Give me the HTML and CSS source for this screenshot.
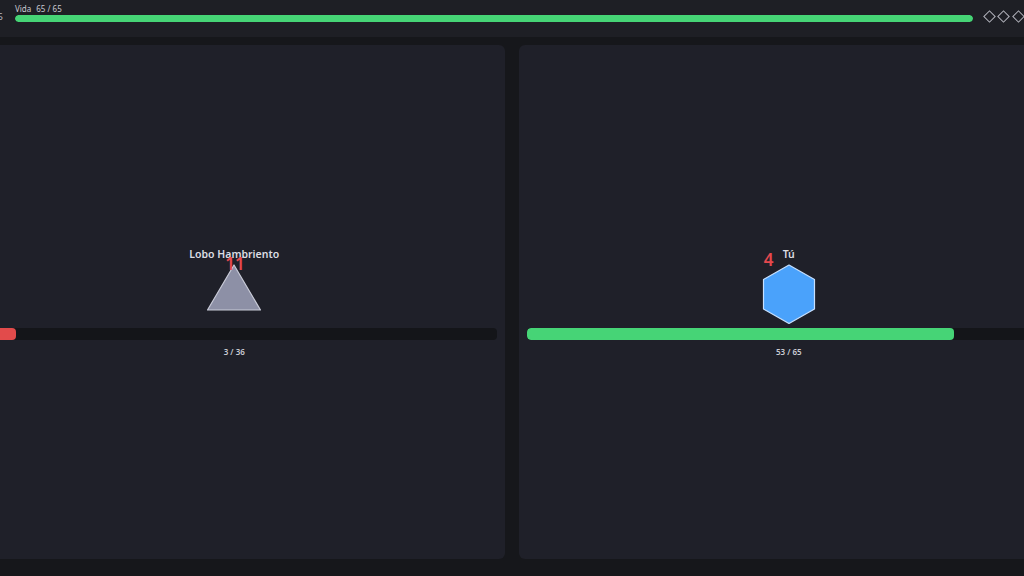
FILE: index.html
```html
<!DOCTYPE html>
<html lang="es">
<head>
<meta charset="utf-8">
<title>Combate</title>
<link rel="stylesheet" href="styles.css">
</head>
<body>
<div class="stage">
  <header class="topbar">
    <div class="level">5</div>
    <div class="vital">
      <div class="vital-label"><span>Vida</span><span>65 / 65</span></div>
      <div class="vital-track"><div class="vital-fill" style="width:100%"></div></div>
    </div>
    <div class="charges">
      <span class="diamond"></span><span class="diamond"></span><span class="diamond"></span><span class="diamond"></span>
    </div>
  </header>
  <main class="arena">
    <section class="panel">
      <div class="fighter">
        <div class="name">Lobo Hambriento</div>
        <div class="sprite">
          <svg width="64" height="62" viewBox="0 0 64 62">
            <polygon points="32,3 58.5,48 5.5,48" fill="#8d90a6" stroke="#c9cbd8" stroke-width="1.2" stroke-linejoin="round"/>
          </svg>
          <span class="dmg dmg-enemy">11</span>
        </div>
      </div>
      <div class="hp-track"><div class="hp-fill hp-low" style="width:8.33%"></div></div>
      <div class="hp-text">3 / 36</div>
    </section>
    <section class="panel">
      <div class="fighter">
        <div class="name">Tú</div>
        <div class="sprite">
          <svg width="64" height="62" viewBox="0 0 64 62">
            <polygon points="32,3 57.5,17.5 57.5,47 32,61.5 6.5,47 6.5,17.5" fill="#4aa2fb" stroke="#c6e0ff" stroke-width="1.2" stroke-linejoin="round"/>
          </svg>
          <span class="dmg dmg-player">4</span>
        </div>
      </div>
      <div class="hp-track"><div class="hp-fill hp-ok" style="width:81.54%"></div></div>
      <div class="hp-text">53 / 65</div>
    </section>
  </main>
</div>
</body>
</html>
```
FILE: styles.css
```css
html, body {
  margin: 0;
  padding: 0;
  background: #16171b;
  overflow: hidden;
  width: 1024px;
  height: 576px;
}
body {
  font-family: "Noto Sans", "Open Sans", sans-serif;
  color: #d6d7dd;
}
.stage {
  width: 1095px;
  margin-left: -36px;
  height: 576px;
  display: flex;
  flex-direction: column;
}
.topbar {
  height: 37px;
  background: #1e1f25;
  display: flex;
  align-items: flex-start;
  padding: 4px 22px 0 8px;
  box-sizing: border-box;
}
.level {
  width: 31px;
  text-align: right;
  font-size: 9px;
  line-height: 12px;
  color: #b8b9c2;
  margin-top: 7px;
  flex: none;
}
.vital {
  flex: 1;
  margin-left: 12px;
  display: flex;
  flex-direction: column;
  gap: 1px;
}
.vital-label {
  font-size: 8px;
  line-height: 10px;
  color: #c9cad2;
  display: flex;
  gap: 5px;
}
.vital-track {
  height: 7px;
  background: #121317;
  border-radius: 4px;
  overflow: hidden;
}
.vital-fill {
  height: 100%;
  background: #46d476;
  border-radius: 4px;
}
.charges {
  display: flex;
  gap: 5.5px;
  margin-left: 12px;
  margin-top: 8px;
  flex: none;
}
.diamond {
  width: 7px;
  height: 7px;
  border: 1.5px solid #b4b5be;
  transform: rotate(45deg);
  display: block;
}
.arena {
  flex: 1;
  display: flex;
  gap: 14px;
  padding: 8px 0 17px;
}
.panel {
  flex: 1;
  background: #1f2029;
  border-radius: 6px;
  padding: 0 8px;
  display: flex;
  flex-direction: column;
  align-items: center;
  justify-content: center;
}
.fighter {
  display: flex;
  flex-direction: column;
  align-items: center;
}
.name {
  font-size: 10.5px;
  line-height: 13px;
  font-weight: 600;
  color: #dcdde3;
}
.sprite {
  position: relative;
  width: 64px;
  height: 62px;
  margin-top: 1px;
  margin-bottom: 2px;
}
.sprite svg {
  display: block;
}
.dmg {
  position: absolute;
  color: #e5484d;
  font-size: 17px;
  font-weight: 600;
  line-height: 18px;
}
.dmg-enemy {
  left: 23px;
  top: -7px;
}
.dmg-player {
  left: 7px;
  top: -11px;
}
.hp-track {
  width: 100%;
  height: 12px;
  background: #141519;
  border-radius: 4px;
  overflow: hidden;
  margin-top: 2px;
}
.hp-fill {
  height: 100%;
  border-radius: 4px;
}
.hp-low { background: #e24b4b; }
.hp-ok { background: #46d476; }
.hp-text {
  font-size: 8px;
  line-height: 11px;
  margin-top: 6px;
  color: #c9cad2;
  font-weight: 600;
}
```
